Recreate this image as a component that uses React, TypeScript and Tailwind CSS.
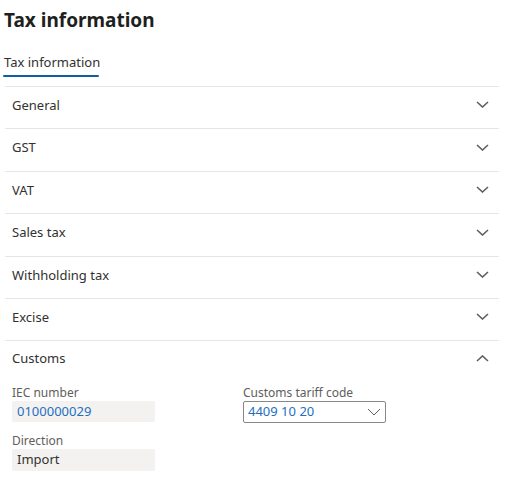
import React from "react";

const font = { fontFamily: '"Segoe UI", "Noto Sans", "Open Sans", sans-serif' };

function ChevronDown() {
  return (
    <svg width="13" height="7" viewBox="0 0 13 7" fill="none">
      <path d="M1 1 L6.5 6 L12 1" stroke="#605e5c" strokeWidth="1.6" />
    </svg>
  );
}
function ChevronUp() {
  return (
    <svg width="13" height="7" viewBox="0 0 13 7" fill="none">
      <path d="M1 6 L6.5 1 L12 6" stroke="#605e5c" strokeWidth="1.6" />
    </svg>
  );
}

const sections: [string, string][] = [
  ["General", "h-[42px]"],
  ["GST", "h-[43px]"],
  ["VAT", "h-[42px]"],
  ["Sales tax", "h-[43px]"],
  ["Withholding tax", "h-[42px]"],
  ["Excise", "h-[42px]"],
];

export default function App() {
  return (
    <div className="w-[505px] h-[482px] bg-white overflow-hidden text-[#323130]" style={font}>
      <div className="pl-[4px] pt-[6px] h-[32px] text-[19px] font-bold leading-[28px] text-[#201f1e]">Tax information</div>
      <div className="pl-[3px] pt-[17px]">
        <div className="inline-block">
          <div className="px-[1px] text-[13px] leading-[18px] h-[22px]">Tax information</div>
          <div className="h-[2px] bg-[#0f5ea8] rounded-[1px] w-[96px]" />
        </div>
      </div>
      <div className="pl-[5px] pr-[6px] mt-[9px]">
        {sections.map(([s, h]) => (
          <div key={s} className={`${h} border-t border-[#e6e6e6] flex items-center justify-between pl-[7px] pr-[10px] pb-[6px]`}>
            <span className="text-[13px] leading-[18px]">{s}</span>
            <ChevronDown />
          </div>
        ))}
        <div className="border-t border-[#e6e6e6]">
          <div className="h-[34px] flex items-center justify-between pl-[7px] pr-[10px]">
            <span className="text-[13px] leading-[18px]">Customs</span>
            <ChevronUp />
          </div>
          <div className="pl-[7px] grid grid-cols-[231px_143px] mt-[10px]">
            <div className="flex flex-col">
              <span className="text-[12px] leading-[16px] text-[#605e5c] h-[16px]">IEC number</span>
              <div className="w-[143px] h-[21px] bg-[#f3f2f1] rounded-[2px] pl-[5px] flex items-center text-[13px] text-[#1f6fc0]">0100000029</div>
            </div>
            <div className="flex flex-col">
              <span className="text-[12px] leading-[16px] text-[#605e5c] h-[16px]">Customs tariff code</span>
              <div className="w-[143px] h-[22px] border border-[#8a8886] rounded-[2px] pl-[4px] pr-[4px] flex items-center justify-between text-[13px] text-[#1f6fc0]">
                <span>4409 10 20</span>
                <svg width="14" height="8" viewBox="0 0 14 8" fill="none">
                  <path d="M1 1 L7 7 L13 1" stroke="#605e5c" strokeWidth="1" />
                </svg>
              </div>
            </div>
            <div className="flex flex-col mt-[10px]">
              <span className="text-[12px] leading-[16px] text-[#605e5c] h-[16px]">Direction</span>
              <div className="w-[143px] h-[22px] bg-[#f3f2f1] rounded-[2px] pl-[5px] flex items-center text-[13px] text-[#323130]">Import</div>
            </div>
          </div>
        </div>
      </div>
    </div>
  );
}
